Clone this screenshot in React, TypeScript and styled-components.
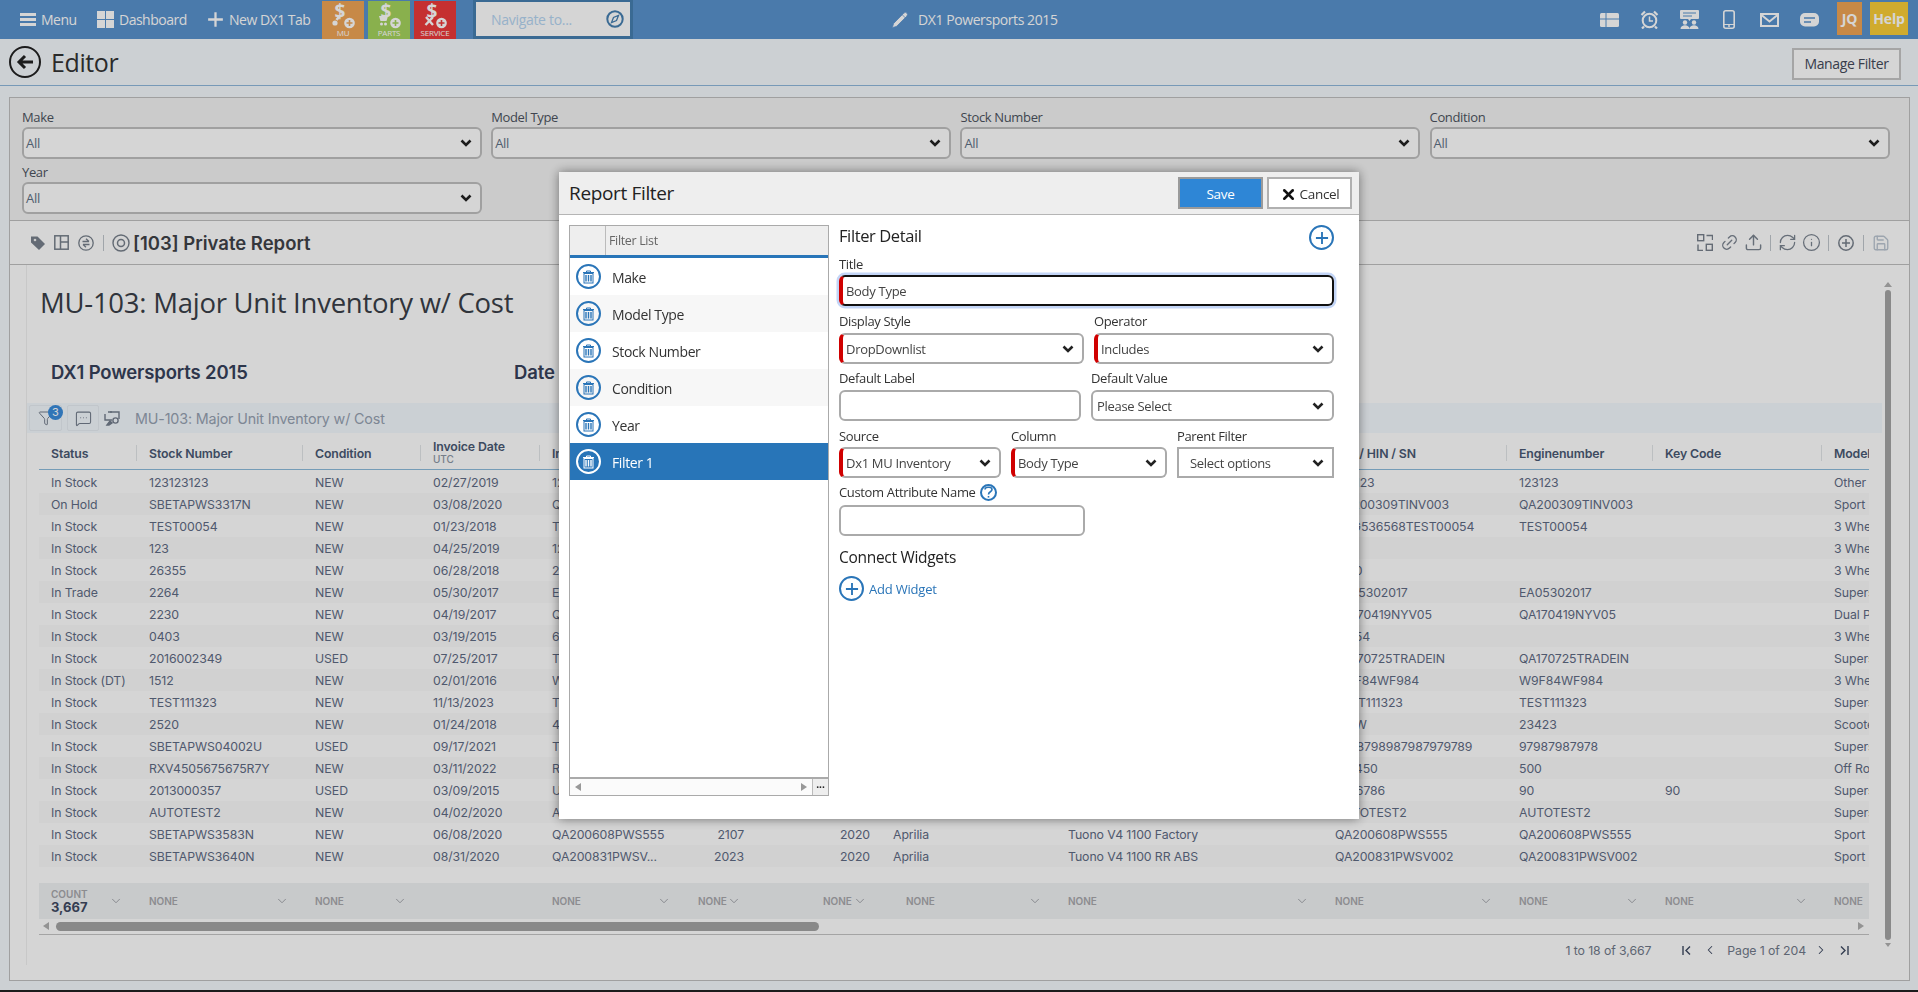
import React from "react";
import styled, { createGlobalStyle } from "styled-components";
import { Pencil, Link2, Upload, RefreshCw, Info, Save as SaveIcon, MessageSquareMore, Funnel, ChevronDown, ChevronLeft, ChevronRight, X } from "lucide-react";

const Global = createGlobalStyle`
  html, body { margin: 0; padding: 0; height: 100%; overflow: hidden; background: #f5f9fd; }
  * { box-sizing: border-box; }
  body { font-family: "Open Sans", "Liberation Sans", sans-serif; }
`;

const Page = styled.div`
  width: 1918px; height: 992px; display: flex; flex-direction: column;
  background: #f5f9fd; border-bottom: 2px solid #222; overflow: hidden;
`;
const TopBar = styled.header`
  height: 39px; flex: none; display: flex; align-items: center; background: #5992cd; padding-left: 20px; color: #fff;
`;
const NavLink = styled.div<{ $w: number }>`
  display: flex; align-items: center; gap: 5px; font-size: 14px; letter-spacing: -.5px; width: ${p => p.$w}px; color: #fff; white-space: nowrap;
`;
const Tile = styled.div<{ $bg: string }>`
  width: 42px; height: 38px; margin: 1px 4px 0 0; background: ${p => p.$bg}; color: #fff; display: flex; flex-direction: column; align-items: center; position: relative;
`;
const TileDollar = styled.span`
  font: 700 19px/19px "Open Sans", sans-serif; margin-top: 1px; margin-left: -6px;
`;
const TileIcon = styled.svg`position: absolute; left: 10px; top: 11px;`;
const TileLabel = styled.span`
  position: absolute; bottom: 1px; left: 0; right: 0; text-align: center; font-size: 8px; line-height: 11px; letter-spacing: -.2px;
`;
const NavBox = styled.div`
  width: 160px; height: 39px; margin-left: 13px; background: #467fb1; padding: 2px 3px 3px; 
`;
const NavInner = styled.div`
  height: 34px; background: #fff; display: flex; align-items: center; justify-content: space-between; padding: 0 6px 0 15px;
  font-size: 14px; letter-spacing: -.3px; color: #b5d5f2;
`;
const CenterTitle = styled.div`
  margin-left: 258px; width: 300px; display: flex; align-items: center; gap: 9px; font-size: 14px; letter-spacing: -.42px; color: #fff;
`;
const TopRight = styled.div`
  margin-left: auto; display: flex; align-items: flex-start; height: 39px; padding-right: 10px;
`;
const TopIcon = styled.div`
  width: 40px; height: 39px; display: flex; align-items: center; justify-content: center;
`;
const UserTag = styled.div<{ $bg: string; $w: number }>`
  width: ${p => p.$w}px; height: 33px; margin: 2px 0 0 8px; background: ${p => p.$bg}; color: #fff; font-size: 14px; font-weight: 700;
  display: flex; align-items: center; justify-content: center; letter-spacing: -.2px;
`;
const EditorBar = styled.div`
  height: 47px; flex: none; display: flex; align-items: center; padding: 0 17px 0 9px; border-bottom: 1px solid #8fb8db; 
`;
const BackButton = styled.div`
  width: 32px; height: 32px; border: 2px solid #222; border-radius: 50%; display: flex; align-items: center; justify-content: center;
`;
const EditorTitle = styled.h1`
  font-size: 25px; font-weight: 400; margin: 0 0 0 10px; color: #333; letter-spacing: -.4px; flex: 1;
`;
const ManageButton = styled.div`
  width: 109px; height: 32px; border: 2px solid #c6c6c6; background: #fff; color: #43495a; font-size: 14px; letter-spacing: -.35px;
  display: flex; align-items: center; justify-content: center; margin-top: 3px;
`;
const Panel = styled.div`
  margin: 11px 9px 0; width: 1901px; height: 884px; border: 1px solid #c0c0c0; display: flex; flex-direction: column; background: #fff;
`;
const FilterGrid = styled.div`
  height: 123px; flex: none; background: #f3f3f3; border-bottom: 1px solid #c0c0c0; padding: 9px 20px 0 12px;
  display: grid; grid-template-columns: repeat(4, 460px); column-gap: 9.2px; grid-auto-rows: 52px; row-gap: 3px; align-content: start;
`;
const FilterCell = styled.div`display: flex; flex-direction: column;`;
const FilterLabel = styled.label`font-size: 13px; line-height: 20px; letter-spacing: -.35px; color: #4d5360;`;
const FilterSelect = styled.div`
  height: 32px; background: #fff; border: 2px solid #c0c0c0; border-radius: 6px; padding: 0 8px 0 2px; font-size: 13px; letter-spacing: -.3px; color: #5f7185;
  display: flex; align-items: center; justify-content: space-between;
`;
const Toolbar = styled.div`
  height: 44px; flex: none; display: flex; align-items: center; padding: 0 19px 0 20px; border-bottom: 1px solid #c0c0c0; color: #7b8490;
`;
const ToolIcon = styled.span<{ $mr?: number }>`display: flex; margin-right: ${p => p.$mr ?? 8}px;`;
const ToolDivider = styled.span<{ $mr?: number }>`width: 1px; height: 16px; background: #c0c6cc; margin-right: ${p => p.$mr ?? 9}px;`;
const ReportName = styled.div`font: 600 18.5px "Inter", sans-serif; color: #3f4248; flex: 1;`;
const ReportBody = styled.div`flex: 1; display: flex; min-height: 0;`;
const ReportContent = styled.div`
  width: 1856px; margin-left: 16px; height: 700px; border-left: 1px solid #f0f0f0; display: flex; flex-direction: column;
`;
const ReportTitle = styled.h2`
  margin: 18px 0 0 13px; font-size: 27.5px; line-height: 40px; font-weight: 400; color: #3a3f48; letter-spacing: -.25px;
`;
const CompanyRow = styled.div`
  margin: 36px 0 0 24px; height: 26px; display: flex; font: 600 18.5px/26px "Inter", sans-serif; color: #37415a; letter-spacing: -.15px;
`;
const CompanyName = styled.div`width: 463px;`;
const WidgetBar = styled.div`
  margin-top: 18px; height: 30px; flex: none; display: flex; align-items: center; background: #f4f9fe; padding-left: 2px; color: #737d8c;
`;
const WidgetButton = styled.div<{ $w: number }>`
  width: ${p => p.$w}px; height: 26px; border: 1px solid #e8eef3; border-radius: 2px; display: flex; align-items: center; justify-content: center; margin-right: 5px; position: relative;
`;
const Badge = styled.span`
  position: absolute; right: -2px; top: -1px; width: 15px; height: 15px; border-radius: 50%; background: #3a8cdc; color: #fff; font: 11px/15px "Inter", sans-serif; text-align: center;
`;
const WidgetName = styled.div`margin-left: 15px; font: 14.3px "Inter", sans-serif; letter-spacing: -.15px; color: #96a2b2;`;
const TableClip = styled.div`margin-left: 12px; width: 1830px; overflow: hidden; font-family: "Inter", sans-serif;`;
const colTemplate = "98px 166px 118px 119px 145px 70px 126px 175px 267px 184px 146px 169px 200px";
const HeaderRow = styled.div`
  display: grid; grid-template-columns: ${colTemplate}; height: 37px; padding-top: 3px; border-bottom: 1px solid #8dbbdc; align-items: center;
`;
const HeaderCell = styled.div<{ $single: boolean }>`
  position: relative; padding: ${p => (p.$single ? "2px" : "0")} 0 0 12px; font-weight: 600; font-size: 12.3px; line-height: 14px; letter-spacing: -.12px; color: #4a5973; white-space: nowrap;
  &::after { content: ""; position: absolute; right: 0; top: 50%; margin-top: -8px; height: 16px; width: 1px; background: #e2e5e8; }
`;
const HeaderSub = styled.div`font-size: 10px; line-height: 11px; color: #8b96a5; font-weight: 500;`;
const Row = styled.div<{ $alt: boolean; $first: boolean }>`
  display: grid; grid-template-columns: ${colTemplate}; height: ${p => (p.$first ? 23 : 22)}px; align-items: center; background: ${p => (p.$alt ? "#fbfbfb" : "#fff")};
`;
const Cell = styled.div<{ $right?: boolean }>`
  padding: 1px ${p => (p.$right ? "11px" : "0")} 0 ${p => (p.$right ? "0" : "12px")}; font-size: 12.3px; letter-spacing: -.1px; color: #5f6b84; white-space: nowrap; overflow: hidden;
  text-align: ${p => (p.$right ? "right" : "left")};
`;
const Footer = styled.div`
  display: grid; grid-template-columns: ${colTemplate}; height: 36px; margin-top: 16px; background: #f0f2f4; align-items: center;
`;
const FootCell = styled.div<{ $pad?: number }>`
  position: relative; display: flex; align-items: center; height: 36px; padding-left: ${p => p.$pad ?? 12}px;
`;
const FootChevron = styled.span`position: absolute; right: 14px; top: 11px; display: flex; color: #8c8e94;`;
const NoneText = styled.span`font-size: 10px; font-weight: 600; color: #a8a8ac;`;
const CountBox = styled.div`display: flex; flex-direction: column; line-height: 13px;`;
const CountLabel = styled.span`font-size: 10px; font-weight: 600; color: #a8a8ac; line-height: 12px;`;
const CountValue = styled.span`font-size: 13px; font-weight: 700; color: #3f4a62; line-height: 15px;`;
const HScroll = styled.div`
  height: 16px; display: flex; align-items: center; border-bottom: 1px solid #c5c5c5; padding: 0 5px 1px 4px; gap: 7px;
`;
const HThumb = styled.div`width: 763px; height: 9px; border-radius: 5px; background: #a5a5a5;`;
const Tri = styled.span<{ $dir: "left" | "right" | "up" | "down"; $color?: string }>`
  width: 0; height: 0; flex: none;
  ${p => p.$dir === "left" && `border-top: 4.5px solid transparent; border-bottom: 4.5px solid transparent; border-right: 6px solid ${p.$color ?? "#b0b0b0"};`}
  ${p => p.$dir === "right" && `border-top: 4.5px solid transparent; border-bottom: 4.5px solid transparent; border-left: 6px solid ${p.$color ?? "#b0b0b0"};`}
  ${p => p.$dir === "up" && `border-left: 4px solid transparent; border-right: 4px solid transparent; border-bottom: 5px solid ${p.$color ?? "#b0b0b0"};`}
  ${p => p.$dir === "down" && `border-left: 3px solid transparent; border-right: 3px solid transparent; border-top: 4px solid ${p.$color ?? "#b0b0b0"};`}
`;
const HSpacer = styled.div`flex: 1;`;
const Pager = styled.div`
  height: 30px; display: flex; align-items: center; justify-content: flex-end; padding-right: 13px; font-size: 12.3px; letter-spacing: -.1px; color: #717a8a;
`;
const PagerCount = styled.span`margin-right: 24px;`;
const PagerIcon = styled.span`display: flex; margin: 0 5px; color: #3f4a62;`;
const PagerText = styled.span`margin: 0 3px 0 5px;`;
const VScroll = styled.div`
  width: 8px; margin: 17px 0 0 2px; height: 683px; display: flex; flex-direction: column; align-items: center; gap: 3px;
`;
const VThumb = styled.div`width: 6px; height: 650px; border-radius: 3px; background: #a5a5a5;`;

/* dialog */
const Overlay = styled.div`
  position: fixed; inset: 0; background: rgba(0,0,0,.165); display: flex; justify-content: center; padding-top: 172px; z-index: 10;
`;
const Dialog = styled.div`
  width: 800px; height: 647px; background: #fff; box-shadow: 0 0 10px rgba(0,0,0,.45); display: flex; flex-direction: column;
  font-family: "Open Sans", "Liberation Sans", sans-serif; color: #222;
`;
const DialogHead = styled.div`
  height: 43px; flex: none; background: #eee; border-bottom: 1px solid #b5b5b5; display: flex; align-items: center; padding: 0 7px 0 10px;
`;
const DialogTitle = styled.div`font-size: 19px; letter-spacing: -.35px; flex: 1; color: #222;`;
const SaveButton = styled.div`
  width: 85px; height: 32px; background: #2e86d6; border: 2.5px solid #9a9a9a; color: #fff; font-size: 13.5px; letter-spacing: -.3px; padding-top: 2px; display: flex; align-items: center; justify-content: center;
`;
const CancelButton = styled.div`
  width: 85px; height: 32px; margin-left: 4px; background: #fff; border: 2.5px solid #b0b0b0; color: #333; font-size: 13.5px; letter-spacing: -.3px; padding-top: 2px; display: flex; align-items: center; justify-content: center; gap: 3px;
`;
const DialogBody = styled.div`flex: 1; display: flex; padding: 10px 0 0 10px;`;
const ListBox = styled.div`
  width: 260px; height: 571px; border: 1px solid #aaa; display: flex; flex-direction: column; 
`;
const ListHead = styled.div`
  height: 32px; flex: none; background: #eee; border-bottom: 3px solid #2875b8; display: flex;
`;
const ListHeadBlank = styled.div`width: 36px; border-right: 1px solid #bbb;`;
const ListHeadText = styled.div`padding: 6px 0 0 3px; font-size: 12.5px; letter-spacing: -.35px; color: #666;`;
const ListRow = styled.div<{ $alt: boolean; $active: boolean }>`
  height: 37px; flex: none; display: flex; align-items: center; padding-left: 6px; gap: 11px; font-size: 14px; letter-spacing: -.38px;
  background: ${p => (p.$active ? "#2875b8" : p.$alt ? "#f7f7f7" : "#fff")}; color: ${p => (p.$active ? "#fff" : "#333")};
`;
const ListLabel = styled.span`padding-top: 1px;`;
const RoundIcon = styled.div<{ $color: string; $size?: number }>`
  width: ${p => p.$size ?? 25}px; height: ${p => p.$size ?? 25}px; border: 2px solid ${p => p.$color}; border-radius: 50%; color: ${p => p.$color}; display: flex; align-items: center; justify-content: center; flex: none;
`;
const ListSpacer = styled.div`flex: 1;`;
const ListScroll = styled.div`
  height: 18px; flex: none; border-top: 2px solid #aaa; background: #fbfbfb; display: flex; align-items: center; padding-left: 5px;
`;
const ListDots = styled.div`
  width: 16px; height: 16px; background: #eee; border-left: 1px solid #bbb; margin-left: 5px; font: 700 10px/10px "Open Sans", sans-serif; text-align: center; color: #222; letter-spacing: 0;
`;
const Detail = styled.div`width: 495px; margin-left: 10px; display: flex; flex-direction: column; position: relative;`;
const SectionHead = styled.div`font-size: 16.5px; line-height: 22px; letter-spacing: -.4px; color: #222;`;
const PlusFloat = styled.div`position: absolute; right: 0; top: 0;`;
const FormRow = styled.div<{ $cols: string; $top: number; $gap?: number }>`
  display: grid; grid-template-columns: ${p => p.$cols}; margin-top: ${p => p.$top}px; column-gap: ${p => p.$gap ?? 10}px;
`;
const FieldGroup = styled.div<{ $gap?: number }>`
  display: flex; flex-direction: column; row-gap: ${p => p.$gap ?? 1}px;
`;
const FieldLabel = styled.label`
  font-size: 13px; line-height: 20px; letter-spacing: -.35px; color: #333; display: flex; align-items: center; gap: 4px;
`;
const Field = styled.div<{ $req?: boolean; $square?: boolean }>`
  height: 31px; border: 2px solid #aaa; border-left: ${p => (p.$req ? "4px solid #d00000" : "2px solid #aaa")}; border-radius: ${p => (p.$square ? 0 : 6)}px;
  padding: 0 8px 0 ${p => (p.$square ? 11 : p.$req ? 3 : 4)}px; font-size: 13px; letter-spacing: -.3px; color: #444; display: flex; align-items: center; justify-content: space-between;
`;
const FocusField = styled(Field)`
  border-top: 2px solid #111; border-right: 2px solid #111; border-bottom: 2px solid #111; box-shadow: 0 0 0 2.5px #c3d5f7;
`;
const AddRow = styled.div`
  display: flex; align-items: center; gap: 5px; margin-top: 7px; font-size: 13px; letter-spacing: -.2px; color: #2a75b8;
`;
const ConnectHead = styled(SectionHead)`font-size: 15.5px; margin-top: 9px; letter-spacing: -.3px; line-height: 24px;`;

const Chev = () => (
  <svg width="12" height="8" viewBox="0 0 12 8"><path d="M1.500 1.500 6 6l4.500-4.500" fill="none" stroke="#222" strokeWidth="2.600" /></svg>
);
const Trash = ({ c }: { c: string }) => (
  <svg width="13" height="14" viewBox="0 0 13 14" fill="none" stroke={c}>
    <path d="M1 2.500h11M4.500 2.500V1h4v1.500" strokeWidth="1" />
    <rect x="2" y="3.500" width="9" height="9.500" strokeWidth="1" />
    <path d="M4 5v6.500M6.500 5v6.500M9 5v6.500" strokeWidth="1.400" />
  </svg>
);
const Plus = ({ c, s = 15 }: { c: string; s?: number }) => (
  <svg width={s} height={s} viewBox="0 0 15 15"><path d="M7.500 1v13M1 7.500h13" stroke={c} strokeWidth="2" /></svg>
);

const IconDollarPart = ({ kind }: { kind: string }) => (
  <TileIcon width="24" height="18" viewBox="0 0 24 18">
    {kind === "mu" && <g><path d="M8 3.500 4.500 8" stroke="#fff" strokeWidth="2.600" /><circle cx="3" cy="11" r="2.600" fill="#fff" /></g>}
    {kind === "parts" && <g fill="#fff"><path d="M1 4h9l-1.500 5H2.500z" /><circle cx="3.500" cy="12" r="1.500" /><circle cx="7.500" cy="12" r="1.500" /></g>}
    {kind === "service" && <path d="M1.500 13 9 5M2 5l7 8" stroke="#fff" strokeWidth="2.400" fill="none" />}
    <circle cx="17.500" cy="11" r="5.300" fill="#fff" />
    <path d="M17.500 8v6M14.500 11h6" stroke={kind === "mu" ? "#efa556" : kind === "parts" ? "#a5d35d" : "#ec3a3a"} strokeWidth="1.600" />
  </TileIcon>
);

const rows: string[][] = [
  ["In Stock","123123123","NEW","02/27/2019","123123","","","","","123123","123123","","Other"],
  ["On Hold","SBETAPWS3317N","NEW","03/08/2020","QA200309TINV003","","","","","QA200309TINV003","QA200309TINV003","","Sport"],
  ["In Stock","TEST00054","NEW","01/23/2018","TEST00054","","","","","QAG536568TEST00054","TEST00054","","3 Wheel"],
  ["In Stock","123","NEW","04/25/2019","123","","","","","","","","3 Wheel"],
  ["In Stock","26355","NEW","06/28/2018","26355","","","","","1230","","","3 Wheel"],
  ["In Trade","2264","NEW","05/30/2017","EA05302017","","","","","EA05302017","EA05302017","","Supersport"],
  ["In Stock","2230","NEW","04/19/2017","QA170419NYV05","","","","","QA170419NYV05","QA170419NYV05","","Dual Purpose"],
  ["In Stock","0403","NEW","03/19/2015","654","","","","","12354","","","3 Wheel"],
  ["In Stock","2016002349","USED","07/25/2017","TRADEIN","","","","","QA170725TRADEIN","QA170725TRADEIN","","Supersport"],
  ["In Stock (DT)","1512","NEW","02/01/2016","W9F84","","","","","W9F84WF984","W9F84WF984","","3 Wheel"],
  ["In Stock","TEST111323","NEW","11/13/2023","TEST111323","","","","","TEST111323","TEST111323","","Supersport"],
  ["In Stock","2520","NEW","01/24/2018","42520","","","","","123W","23423","","Scooter"],
  ["In Stock","SBETAPWS04002U","USED","09/17/2021","TEST","","","","","9798798987987979789","97987987978","","Supersport"],
  ["In Stock","RXV4505675675R7Y","NEW","03/11/2022","RXV","","","","","123450","500","","Off Road"],
  ["In Stock","2013000357","USED","03/09/2015","U2013","","","","","7676786","90","90","Supersport"],
  ["In Stock","AUTOTEST2","NEW","04/02/2020","AUTOTEST2","","","","","AUTOTEST2","AUTOTEST2","","Supersport"],
  ["In Stock","SBETAPWS3583N","NEW","06/08/2020","QA200608PWS555","2107","2020","Aprilia","Tuono V4 1100 Factory","QA200608PWS555","QA200608PWS555","","Sport"],
  ["In Stock","SBETAPWS3640N","NEW","08/31/2020","QA200831PWSV...","2023","2020","Aprilia","Tuono V4 1100 RR ABS","QA200831PWSV002","QA200831PWSV002","","Sport"],
];
const headers = ["Status","Stock Number","Condition","Invoice Date","Invoice Number","Stock","Year","Make","Model Name","VIN / HIN / SN","Enginenumber","Key Code","Model"];
const filterItems = ["Make","Model Type","Stock Number","Condition","Year","Filter 1"];
const FootDown = () => <FootChevron><ChevronDown size={14} strokeWidth={1.3} /></FootChevron>;

export default function App() {
  return (
    <>
      <Global />
      <Page>
        <TopBar>
          <NavLink $w={77}>
            <svg width="16" height="15" viewBox="0 0 16 15" fill="#fff"><rect width="16" height="3" y="1" /><rect width="16" height="3" y="6" /><rect width="16" height="3" y="11" /></svg>
            Menu
          </NavLink>
          <NavLink $w={110}>
            <svg width="17" height="17" viewBox="0 0 17 17" fill="#fff"><rect width="8" height="8" /><rect x="9" width="8" height="8" /><rect y="9" width="8" height="8" /><rect x="9" y="9" width="8" height="8" /></svg>
            Dashboard
          </NavLink>
          <NavLink $w={115}>
            <Plus c="#fff" s={17} />
            New DX1 Tab
          </NavLink>
          <Tile $bg="#efa556"><TileDollar>$</TileDollar><IconDollarPart kind="mu" /><TileLabel>MU</TileLabel></Tile>
          <Tile $bg="#a5d35d"><TileDollar>$</TileDollar><IconDollarPart kind="parts" /><TileLabel>PARTS</TileLabel></Tile>
          <Tile $bg="#ec3a3a"><TileDollar>$</TileDollar><IconDollarPart kind="service" /><TileLabel>SERVICE</TileLabel></Tile>
          <NavBox>
            <NavInner>
              Navigate to...
              <svg width="18" height="18" viewBox="0 0 18 18" fill="none"><circle cx="9" cy="9" r="7.700" stroke="#467fb1" strokeWidth="2" /><path d="M12.500 5.500 10.500 10.500 5.500 12.500 7.500 7.500z" stroke="#467fb1" strokeWidth="1.300" /></svg>
            </NavInner>
          </NavBox>
          <CenterTitle>
            <Pencil size={18} fill="#fff" stroke="#5992cd" strokeWidth={1} />
            DX1 Powersports 2015
          </CenterTitle>
          <TopRight>
            <TopIcon><svg width="19" height="14" viewBox="0 0 19 14"><rect width="19" height="14" rx="1.500" fill="#fff" /><path d="M0 6h19M6 0v14" stroke="#5992cd" strokeWidth="1" /></svg></TopIcon>
            <TopIcon><svg width="19" height="19" viewBox="0 0 19 19" fill="none" stroke="#fff"><circle cx="9.500" cy="10.500" r="6.800" strokeWidth="2" /><path d="M9.500 6.500v4.500h3.500" strokeWidth="1.500" /><path d="M1.500 5 5 1.500M17.500 5 14 1.500M4 16.500l-2 2M15 16.500l2 2" strokeWidth="2.200" /></svg></TopIcon>
            <TopIcon><svg width="19" height="19" viewBox="0 0 19 19" fill="#fff"><rect width="19" height="9" rx="1" /><path d="M8 9h3l-1.500 2z" /><circle cx="5" cy="12.500" r="2.200" /><circle cx="14" cy="12.500" r="2.200" /><path d="M0.500 19c0-5 9-5 9 0zM9.500 19c0-5 9-5 9 0z" /><path d="M3 3h13M3 6h9" stroke="#5992cd" strokeWidth="1" /></svg></TopIcon>
            <TopIcon><svg width="12" height="19" viewBox="0 0 12 19"><rect x=".8" y=".8" width="10.400" height="17.400" rx="2" fill="none" stroke="#fff" strokeWidth="1.600" /><circle cx="6" cy="16" r="1" fill="#fff" /><rect x="1" y="14" width="10" height="1" fill="#fff" /></svg></TopIcon>
            <TopIcon><svg width="19" height="14" viewBox="0 0 19 14" fill="none" stroke="#fff" strokeWidth="2"><rect x="1" y="1" width="17" height="12" /><path d="m1.500 2 8 6.500 8-6.500" /></svg></TopIcon>
            <TopIcon><svg width="19" height="14" viewBox="0 0 19 14"><rect width="19" height="13.500" rx="5" fill="#fff" /><path d="M4 5h11M4 9h7" stroke="#5992cd" strokeWidth="1.400" /></svg></TopIcon>
            <UserTag $bg="#efa556" $w={25}>JQ</UserTag>
            <UserTag $bg="#f9cd38" $w={38}>Help</UserTag>
          </TopRight>
        </TopBar>
        <EditorBar>
          <BackButton>
            <svg width="18" height="16" viewBox="0 0 18 16" fill="none" stroke="#222" strokeWidth="3"><path d="M17 8H3M9 2 3 8l6 6" /></svg>
          </BackButton>
          <EditorTitle>Editor</EditorTitle>
          <ManageButton>Manage Filter</ManageButton>
        </EditorBar>
        <Panel>
          <FilterGrid>
            {["Make","Model Type","Stock Number","Condition","Year"].map(n => (
              <FilterCell key={n}>
                <FilterLabel>{n}</FilterLabel>
                <FilterSelect>All<Chev /></FilterSelect>
              </FilterCell>
            ))}
          </FilterGrid>
          <Toolbar>
            <ToolIcon><svg width="16" height="16" viewBox="0 0 16 16"><path d="M1 1.500h6.500l7.500 7.500-6 6-8-7.500z" fill="#78818c" /><circle cx="5" cy="5" r="1.300" fill="#f3f3f3" /></svg></ToolIcon>
            <ToolIcon $mr={9}><svg width="15" height="15" viewBox="0 0 15 15" fill="none" stroke="#78818c" strokeWidth="1.500"><rect x=".8" y=".8" width="13.400" height="13.400" /><path d="M6.500 1v13M6.500 7h8" /></svg></ToolIcon>
            <ToolIcon $mr={9}><svg width="16" height="16" viewBox="0 0 16 16" fill="none" stroke="#78818c" strokeWidth="1.300"><circle cx="8" cy="8" r="7.200" /><path d="M4.500 6.500H11M8 3.800l3 2.700M11.500 9.500H5M8 12.200 5 9.500" /></svg></ToolIcon>
            <ToolDivider $mr={8} />
            <ToolIcon $mr={3}><svg width="18" height="18" viewBox="0 0 18 18" fill="none" stroke="#78818c" strokeWidth="1.500"><circle cx="9" cy="9" r="8" strokeWidth="1.400" /><circle cx="9" cy="9" r="3.500" /></svg></ToolIcon>
            <ReportName>[103] Private Report</ReportName>
            <ToolIcon $mr={7}>
              <svg width="16" height="17" viewBox="0 0 16 17" fill="none" stroke="#78818c" strokeWidth="1.400"><rect x=".7" y=".7" width="6" height="6" /><rect x="9.300" y="10.300" width="6" height="6" /><path d="M9.500 1.500h6V6M1 10.500v6h5" /></svg>
            </ToolIcon>
            <ToolIcon $mr={5}><Link2 size={19} strokeWidth={1.7} style={{ transform: "rotate(-45deg)" }} /></ToolIcon>
            <ToolIcon $mr={7}><Upload size={19} strokeWidth={1.8} /></ToolIcon>
            <ToolDivider $mr={7} />
            <ToolIcon $mr={5}><RefreshCw size={19} strokeWidth={1.6} /></ToolIcon>
            <ToolIcon $mr={7}><Info size={19} strokeWidth={1.6} /></ToolIcon>
            <ToolDivider />
            <ToolIcon $mr={9}><svg width="16" height="16" viewBox="0 0 16 16" fill="none" stroke="#78818c" strokeWidth="1.500"><circle cx="8" cy="8" r="7.200" /><path d="M8 4v8M4 8h8" /></svg></ToolIcon>
            <ToolDivider $mr={8} />
            <ToolIcon $mr={0}><SaveIcon size={18} color="#bcc6d2" strokeWidth={1.8} /></ToolIcon>
          </Toolbar>
          <ReportBody>
            <ReportContent>
              <ReportTitle>MU-103: Major Unit Inventory w/ Cost</ReportTitle>
              <CompanyRow><CompanyName>DX1 Powersports 2015</CompanyName><span>Date</span></CompanyRow>
              <WidgetBar>
                <WidgetButton $w={33}><Funnel size={16} strokeWidth={1.5} /><Badge>3</Badge></WidgetButton>
                <WidgetButton $w={32}><MessageSquareMore size={17} strokeWidth={1.5} /></WidgetButton>
                <ToolIcon $mr={0}><svg width="16" height="16" viewBox="0 0 16 16" fill="none" stroke="#737d8c" strokeWidth="1.400"><path d="M4 2h11v7M1 4v6h7" /><circle cx="11.500" cy="10.500" r="2.600" /><path d="M3 15l3-4 2 2-3 2z" fill="#737d8c" /><path d="M7 1v2" /></svg></ToolIcon>
                <WidgetName>MU-103: Major Unit Inventory w/ Cost</WidgetName>
              </WidgetBar>
              <TableClip>
                <HeaderRow>
                  {headers.map(h => (
                    <HeaderCell key={h} $single={h !== "Invoice Date"}>
                      {h}
                      {h === "Invoice Date" && <HeaderSub>UTC</HeaderSub>}
                    </HeaderCell>
                  ))}
                </HeaderRow>
                {rows.map((r, i) => (
                  <Row key={i} $alt={i % 2 === 1} $first={i === 0}>
                    {r.map((c, j) => <Cell key={j} $right={j === 5 || j === 6}>{c}</Cell>)}
                  </Row>
                ))}
                <Footer>
                  <FootCell>
                    <CountBox><CountLabel>COUNT</CountLabel><CountValue>3,667</CountValue></CountBox>
                    <FootDown />
                  </FootCell>
                  <FootCell><NoneText>NONE</NoneText><FootDown /></FootCell>
                  <FootCell><NoneText>NONE</NoneText><FootDown /></FootCell>
                  <FootCell />
                  <FootCell><NoneText>NONE</NoneText><FootDown /></FootCell>
                  <FootCell $pad={13}><NoneText>NONE</NoneText><FootDown /></FootCell>
                  <FootCell $pad={68}><NoneText>NONE</NoneText><FootDown /></FootCell>
                  <FootCell $pad={25}><NoneText>NONE</NoneText><FootDown /></FootCell>
                  <FootCell><NoneText>NONE</NoneText><FootDown /></FootCell>
                  <FootCell><NoneText>NONE</NoneText><FootDown /></FootCell>
                  <FootCell><NoneText>NONE</NoneText><FootDown /></FootCell>
                  <FootCell><NoneText>NONE</NoneText><FootDown /></FootCell>
                  <FootCell><NoneText>NONE</NoneText></FootCell>
                </Footer>
                <HScroll>
                  <Tri $dir="left" /><HThumb /><HSpacer /><Tri $dir="right" />
                </HScroll>
                <Pager>
                  <PagerCount>1 to 18 of 3,667</PagerCount>
                  <PagerIcon><svg width="13" height="13" viewBox="0 0 13 13" fill="none" stroke="currentColor" strokeWidth="1.400"><path d="m10 2.500-4 4 4 4M3 2v9" /></svg></PagerIcon>
                  <PagerIcon><ChevronLeft size={14} strokeWidth={1.8} /></PagerIcon>
                  <PagerText>Page 1 of 204</PagerText>
                  <PagerIcon><ChevronRight size={14} strokeWidth={1.8} /></PagerIcon>
                  <PagerIcon><svg width="13" height="13" viewBox="0 0 13 13" fill="none" stroke="currentColor" strokeWidth="1.400"><path d="m3 2.500 4 4-4 4M10 2v9" /></svg></PagerIcon>
                </Pager>
              </TableClip>
            </ReportContent>
            <VScroll>
              <Tri $dir="up" /><VThumb /><Tri $dir="down" />
            </VScroll>
          </ReportBody>
        </Panel>
      </Page>
      <Overlay>
        <Dialog>
          <DialogHead>
            <DialogTitle>Report Filter</DialogTitle>
            <SaveButton>Save</SaveButton>
            <CancelButton><X size={17} strokeWidth={3.6} color="#111" />Cancel</CancelButton>
          </DialogHead>
          <DialogBody>
            <ListBox>
              <ListHead><ListHeadBlank /><ListHeadText>Filter List</ListHeadText></ListHead>
              {filterItems.map((f, i) => {
                const active = i === 5;
                return (
                  <ListRow key={f} $alt={i % 2 === 1} $active={active}>
                    <RoundIcon $color={active ? "#fff" : "#2a75b8"}><Trash c={active ? "#fff" : "#2a75b8"} /></RoundIcon>
                    <ListLabel>{f}</ListLabel>
                  </ListRow>
                );
              })}
              <ListSpacer />
              <ListScroll>
                <Tri $dir="left" $color="#999" /><HSpacer /><Tri $dir="right" $color="#999" /><ListDots>...</ListDots>
              </ListScroll>
            </ListBox>
            <Detail>
              <SectionHead>Filter Detail</SectionHead>
              <PlusFloat><RoundIcon $color="#2a75b8"><Plus c="#2a75b8" s={14} /></RoundIcon></PlusFloat>
              <FormRow $cols="495px" $top={7}>
                <FieldGroup $gap={1}>
                  <FieldLabel>Title</FieldLabel>
                  <FocusField $req>Body Type</FocusField>
                </FieldGroup>
              </FormRow>
              <FormRow $cols="245px 240px" $top={5}>
                <FieldGroup $gap={2}><FieldLabel>Display Style</FieldLabel><Field $req>DropDownlist<Chev /></Field></FieldGroup>
                <FieldGroup $gap={2}><FieldLabel>Operator</FieldLabel><Field $req>Includes<Chev /></Field></FieldGroup>
              </FormRow>
              <FormRow $cols="242px 243px" $top={4}>
                <FieldGroup $gap={2}><FieldLabel>Default Label</FieldLabel><Field /></FieldGroup>
                <FieldGroup $gap={2}><FieldLabel>Default Value</FieldLabel><Field>Please Select<Chev /></Field></FieldGroup>
              </FormRow>
              <FormRow $cols="162px 156px 157px" $top={5}>
                <FieldGroup><FieldLabel>Source</FieldLabel><Field $req>Dx1 MU Inventory<Chev /></Field></FieldGroup>
                <FieldGroup><FieldLabel>Column</FieldLabel><Field $req>Body Type<Chev /></Field></FieldGroup>
                <FieldGroup><FieldLabel>Parent Filter</FieldLabel><Field $square>Select options<Chev /></Field></FieldGroup>
              </FormRow>
              <FormRow $cols="246px" $top={4}>
                <FieldGroup $gap={3}>
                  <FieldLabel>Custom Attribute Name
                    <RoundIcon $color="#2a75b8" $size={17}>
                      <svg width="9" height="12" viewBox="0 0 9 12" fill="none" stroke="#2a75b8" strokeWidth="1.600"><path d="M1 3.500C1 .5 8 .5 8 3.500c0 2.500-3.500 2-3.500 5" /><path d="M4.500 10v1.600" /></svg>
                    </RoundIcon>
                  </FieldLabel>
                  <Field />
                </FieldGroup>
              </FormRow>
              <ConnectHead>Connect Widgets</ConnectHead>
              <AddRow>
                <RoundIcon $color="#2a75b8"><Plus c="#2a75b8" s={14} /></RoundIcon>
                Add Widget
              </AddRow>
            </Detail>
          </DialogBody>
        </Dialog>
      </Overlay>
    </>
  );
}
